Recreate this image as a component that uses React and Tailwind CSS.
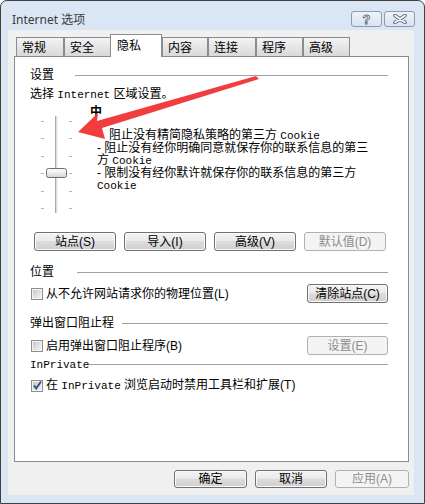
import React from 'react';

// Latin words in the dialog body are drawn in a narrow fixed-width face
const M = ({ children }) => (
  <span className="font-['Liberation_Mono',monospace] text-[11px]">{children}</span>
);

const Btn = ({ children, className = "", disabled = false }) => (
  <div
    className={`flex items-center justify-center rounded-[3px] border text-[12px] leading-[12px] ${
      disabled
        ? 'border-[#adb2b5] bg-[#f4f4f4] text-[#8d8d8d]'
        : 'border-[#707070] bg-[linear-gradient(#f3f3f3,#ebebeb_45%,#dddddd_50%,#cfcfcf)] text-black shadow-[inset_0_0_0_1px_#fbfbfb]'
    } ${className}`}
  >
    {children}
  </div>
);

const Check = ({ checked = false }) => (
  <div className="w-[12px] h-[12px] shrink-0 border border-[#8e8f8f] bg-[#f4f4f4] p-[1px]">
    <div className="relative w-full h-full bg-[linear-gradient(135deg,#c9c9c9,#f4f4f4)]">
      {checked && (
        <svg className="absolute left-[-1px] top-[-2px]" width="11" height="11" viewBox="0 0 11 11">
          <path d="M2 5.5 L4.3 8.3 L9 1.5" fill="none" stroke="#3c5394" strokeWidth="2" />
        </svg>
      )}
    </div>
  </div>
);

const Header = ({ children, lineClass = "" }) => (
  <div className="flex items-center h-[12px]">
    <span className="whitespace-nowrap">{children}</span>
    <div className={`flex-1 h-px bg-[#a0a0a0] ${lineClass}`} />
  </div>
);

const tabs = [
  { label: '常规', w: 'w-[48px]' },
  { label: '安全', w: 'w-[48px]' },
  { label: '隐私', w: 'w-[52px]', active: true },
  { label: '内容', w: 'w-[46px]' },
  { label: '连接', w: 'w-[48px]' },
  { label: '程序', w: 'w-[47px]' },
  { label: '高级', w: 'w-[47px]' },
];

// vertical trackbar with tick marks
const Slider = () => {
  const ticks = [6, 23, 41, 58, 76, 93];
  return (
    <svg width="34" height="100" viewBox="0 0 34 100">
      {ticks.map((y) => (
        <g key={y}>
          <line x1="1" x2="4" y1={y + 0.5} y2={y + 0.5} stroke="#b4b4b4" />
          <line x1="29" x2="32" y1={y + 0.5} y2={y + 0.5} stroke="#b4b4b4" />
        </g>
      ))}
      <line x1="15.5" x2="15.5" y1="1" y2="98" stroke="#a9a9a9" />
      <line x1="16.5" x2="16.5" y1="1" y2="98" stroke="#dcdcdc" />
      <line x1="17.5" x2="17.5" y1="1" y2="98" stroke="#f4f4f4" />
      <defs>
        <linearGradient id="thumb" x1="0" y1="0" x2="0" y2="1">
          <stop offset="0" stopColor="#fdfdfd" />
          <stop offset="0.5" stopColor="#ececec" />
          <stop offset="1" stopColor="#d2d2d2" />
        </linearGradient>
      </defs>
      <rect x="6.5" y="53.5" width="20" height="9" rx="2" fill="url(#thumb)" stroke="#707070" />
    </svg>
  );
};

export default function App() {
  return (
    <div className="relative w-[425px] h-[504px] bg-white font-['Liberation_Sans','Noto_Sans_CJK_SC',sans-serif] text-black">
      <div className="flex flex-col w-full h-full rounded-t-[7px] border border-[#3f3f3f] bg-[#dbe6f4]">
        {/* title bar */}
        <div className="flex h-[29px] shrink-0">
          <span className="ml-[11px] mt-[12px] text-[12px] leading-[14px] text-[#3a3a3a] font-['Noto_Sans','Noto_Sans_CJK_SC',sans-serif]">
            Internet 选项
          </span>
          <div className="ml-auto mr-[9px] mt-[10px] flex gap-[2px]">
            <div className="flex items-center justify-center w-[31px] h-[16px] rounded-[3px] border border-[#8b9bb1] bg-[linear-gradient(#eef3f9,#d9e3ef)]">
              <span className="text-[13px] leading-[13px] font-bold text-white [-webkit-text-stroke:0.8px_#5f6b7c]">?</span>
            </div>
            <div className="flex items-center justify-center w-[31px] h-[16px] rounded-[3px] border border-[#8b9bb1] bg-[linear-gradient(#eef3f9,#d9e3ef)]">
              <svg width="14" height="10" viewBox="0 0 14 10">
                <path d="M2 1.5 L12 8.5 M12 1.5 L2 8.5" stroke="#5f6b7c" strokeWidth="3.6" strokeLinecap="round" />
                <path d="M2 1.5 L12 8.5 M12 1.5 L2 8.5" stroke="#ffffff" strokeWidth="1.6" strokeLinecap="round" />
              </svg>
            </div>
          </div>
        </div>

        {/* client area */}
        <div className="ml-[7px] w-[406px] h-[465px] bg-[#f0f0f0] flex flex-col text-[12px] leading-[12px]">
          <div className="flex items-end h-[22px] mt-[4px] pl-[8px]">
            {tabs.map((t) =>
              t.active ? (
                <div
                  key={t.label}
                  className={`relative z-10 ${t.w} -ml-[2px] h-[23px] -mb-[1px] border border-b-0 border-[#898c95] bg-white pl-[6px] pt-[5px]`}
                >
                  {t.label}
                </div>
              ) : (
                <div
                  key={t.label}
                  className={`${t.w} h-[19px] border border-b-0 border-[#898c95] bg-[linear-gradient(#f3f3f3,#e6e6e6_50%,#d9d9d9)] pl-[5px] pt-[4px]`}
                >
                  {t.label}
                </div>
              )
            )}
          </div>

          {/* tab page */}
          <div className="ml-[6px] w-[395px] h-[406px] border border-[#898c95] bg-white">
            <div className="flex flex-col pl-[15px] pr-[20px]">
              <div className="mt-[12px]">
                <Header lineClass="ml-[21px]">设置</Header>
              </div>
              <div className="mt-[7px] h-[12px] whitespace-nowrap">
                选择 <M>Internet</M> 区域设置。
              </div>

              <div className="flex h-[115px]">
                <div className="ml-[10px] mt-[15px]">
                  <Slider />
                </div>
                <div className="ml-[16px] flex flex-col whitespace-nowrap">
                  <div className="mt-[6px] font-bold">中</div>
                  <div className="mt-[11px] pl-[7px]">
                    <div className="pl-[12px]">阻止没有精简隐私策略的第三方 <M>Cookie</M></div>
                    <div>- 阻止没有经你明确同意就保存你的联系信息的第三</div>
                    <div>方 <M>Cookie</M></div>
                    <div>- 限制没有经你默许就保存你的联系信息的第三方</div>
                    <div><M>Cookie</M></div>
                  </div>
                </div>
              </div>

              <div className="mt-[17px] ml-[4px] flex gap-[8px]">
                <Btn className="w-[82px] h-[19px]">站点(S)</Btn>
                <Btn className="w-[82px] h-[19px]">导入(I)</Btn>
                <Btn className="w-[82px] h-[19px]">高级(V)</Btn>
                <Btn className="w-[82px] h-[19px]" disabled>默认值(D)</Btn>
              </div>

              <div className="mt-[15px]">
                <Header lineClass="ml-[23px]">位置</Header>
              </div>
              <div className="mt-[6px] flex items-center h-[19px]">
                <div className="ml-[1px]"><Check /></div>
                <span className="ml-[3px] whitespace-nowrap">从不允许网站请求你的物理位置(L)</span>
                <Btn className="ml-auto w-[81px] h-[19px]">清除站点(C)</Btn>
              </div>

              <div className="mt-[14px]">
                <Header lineClass="ml-[8px]">弹出窗口阻止程</Header>
              </div>
              <div className="mt-[7px] flex items-center h-[19px]">
                <div className="ml-[1px]"><Check /></div>
                <span className="ml-[3px] whitespace-nowrap">启用弹出窗口阻止程序(B)</span>
                <Btn className="ml-auto w-[81px] h-[19px]" disabled>设置(E)</Btn>
              </div>

              <div className="mt-[3px]">
                <Header><M>InPrivate</M></Header>
              </div>
              <div className="mt-[9px] flex items-center h-[13px]">
                <div className="ml-[1px]"><Check checked /></div>
                <span className="ml-[3px] whitespace-nowrap">在 <M>InPrivate</M> 浏览启动时禁用工具栏和扩展(T)</span>
              </div>
            </div>
          </div>

          {/* dialog buttons */}
          <div className="mt-[8px] flex justify-end gap-[8px] pr-[5px]">
            <Btn className="w-[73px] h-[18px]">确定</Btn>
            <Btn className="w-[72px] h-[18px]">取消</Btn>
            <Btn className="w-[74px] h-[18px]" disabled>应用(A)</Btn>
          </div>
        </div>
      </div>

      {/* red annotation arrow */}
      <svg className="absolute left-0 top-0 pointer-events-none" width="425" height="504" viewBox="0 0 425 504">
        <polygon
          points="78,132 98,113 97,121 256,76 259,79 102,128 105,139"
          fill="#f13d3d"
        />
      </svg>
    </div>
  );
}
